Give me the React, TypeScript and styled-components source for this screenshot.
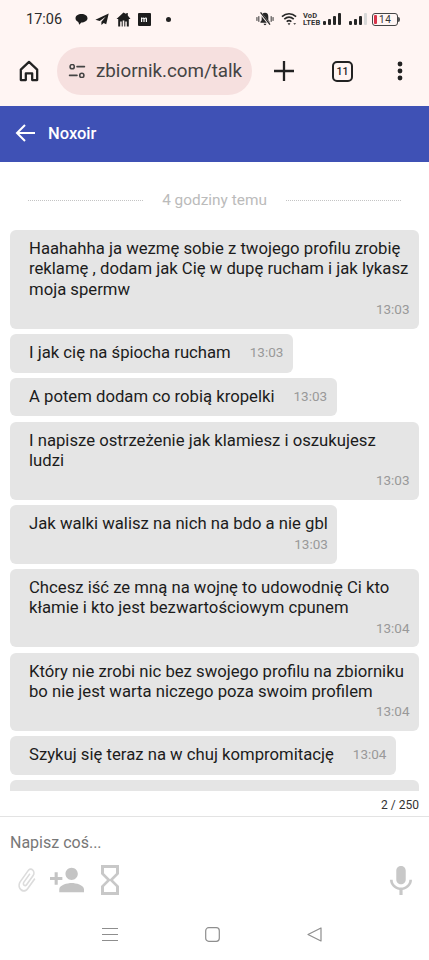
import React from 'react';
import styled, { createGlobalStyle } from 'styled-components';

const GlobalStyle = createGlobalStyle`
  html, body {
    margin: 0;
    padding: 0;
    background: #fff;
    font-family: Roboto, 'Liberation Sans', sans-serif;
  }
`;

const Page = styled.div`
  width: 429px;
  height: 960px;
  display: flex;
  flex-direction: column;
  overflow: hidden;
  background: #fff;
`;

const BrowserTop = styled.div`
  background: #fff5f3;
  height: 106px;
  flex: none;
`;

const StatusBar = styled.div`
  height: 38px;
  display: flex;
  align-items: center;
  padding: 0 31px 0 26px;
  color: #2b2b2b;
`;

const Clock = styled.span`
  font-size: 14.5px;
  width: 49px;
`;

const StatusLeft = styled.div`
  display: flex;
  align-items: center;
  gap: 7px;
`;

const StatusRight = styled.div`
  margin-left: auto;
  display: flex;
  align-items: center;
  gap: 5px;
`;

const NotifDot = styled.span`
  width: 5px;
  height: 5px;
  border-radius: 50%;
  background: #222;
  margin-left: 8px;
`;

const Volte = styled.span`
  display: flex;
  flex-direction: column;
  font-size: 7.5px;
  line-height: 7.5px;
  font-weight: 700;
  letter-spacing: 0.1px;
  width: 15px;
  color: #333;
`;

const Battery = styled.span`
  width: 22px;
  height: 11px;
  border: 1px solid #444;
  border-radius: 3px;
  display: flex;
  align-items: center;
  gap: 2px;
  padding: 0 1px;
  font-size: 10px;
  letter-spacing: 0.6px;
  color: #333;
  position: relative;
  &::before {
    content: '';
    width: 3px;
    height: 9px;
    background: #d8344a;
    border-radius: 1px;
  }
  &::after {
    content: '';
    position: absolute;
    right: -3px;
    top: 3px;
    width: 2px;
    height: 5px;
    background: #555;
    border-radius: 0 2px 2px 0;
  }
`;

const Toolbar = styled.div`
  height: 68px;
  display: flex;
  align-items: flex-start;
  padding: 9px 0 0 18px;
`;

const ToolIcon = styled.div<{ $ml?: number; $w?: number }>`
  height: 48px;
  display: flex;
  align-items: center;
  justify-content: center;
  flex: none;
  margin-left: ${(p) => p.$ml ?? 0}px;
  width: ${(p) => (p.$w ? `${p.$w}px` : 'auto')};
`;

const AddressPill = styled.div`
  margin-left: 17px;
  width: 195px;
  height: 48px;
  border-radius: 24px;
  background: #f6e0df;
  display: flex;
  align-items: center;
  padding-left: 11px;
  box-sizing: border-box;
  flex: none;
`;

const UrlText = styled.span`
  margin-left: 10px;
  font-size: 18.8px;
  color: #444;
  white-space: nowrap;
`;

const TabCount = styled.span`
  width: 17px;
  height: 17px;
  border: 2px solid #222;
  border-radius: 5px;
  display: flex;
  align-items: center;
  justify-content: center;
  font-size: 10.5px;
  font-weight: 500;
  color: #222;
`;

const ChatHeader = styled.div`
  height: 56px;
  flex: none;
  background: #3f51b5;
  display: flex;
  align-items: center;
  padding: 0 0 2px 15px;
  box-sizing: border-box;
  color: #fff;
  gap: 13px;
`;

const ChatTitle = styled.span`
  font-size: 16.5px;
  font-weight: 500;
`;

const Thread = styled.div`
  height: 629px;
  flex: none;
  overflow: hidden;
  padding: 0 10px;
  box-sizing: border-box;
  display: flex;
  flex-direction: column;
  gap: 5.3px;
`;

const TimeDivider = styled.div`
  height: 68px;
  flex: none;
  margin-bottom: -5.3px;
  display: flex;
  align-items: center;
  justify-content: center;
  gap: 19px;
  padding: 8px 18px 0;
  box-sizing: border-box;
  font-size: 15.4px;
  color: #bbb;
  white-space: nowrap;
  &::before,
  &::after {
    content: '';
    flex: 1;
    border-top: 1px dotted #c4c4c4;
  }
`;

const Bubble = styled.div<{ $stacked?: boolean; $full?: boolean }>`
  background: #e5e5e5;
  border-radius: 6px;
  align-self: flex-start;
  box-sizing: border-box;
  padding: 9px 9.5px 9px 19px;
  flex: none;
  display: ${(p) => (p.$stacked ? 'block' : 'flex')};
  gap: 19px;
  width: ${(p) => (p.$full ? '409px' : 'auto')};
  max-width: 409px;
`;

const BubbleText = styled.div`
  font-size: 16.7px;
  line-height: 20.4px;
  color: #1c1c1c;
`;

const BubbleTime = styled.div`
  font-size: 13.5px;
  line-height: 19.7px;
  color: #999;
  text-align: right;
  white-space: nowrap;
`;

const EmptyBubble = styled.div`
  background: #e5e5e5;
  border-radius: 6px 6px 0 0;
  height: 40px;
  flex: none;
`;

const Counter = styled.div`
  height: 26px;
  flex: none;
  display: flex;
  align-items: center;
  justify-content: flex-end;
  padding: 2px 10px 0 0;
  box-sizing: border-box;
  font-size: 12px;
  color: #333;
  border-bottom: 1px solid #e3e3e3;
`;

const Composer = styled.div`
  padding: 16px 10px 0;
  flex: none;
  height: 92px;
  box-sizing: border-box;
`;

const Placeholder = styled.div`
  font-size: 16px;
  line-height: 20px;
  color: #777;
`;

const ComposerIcons = styled.div`
  display: flex;
  align-items: center;
  margin-top: 12px;
  padding: 0 7px 0 5px;
  gap: 11px;
`;

const HourglassWrap = styled.div`
  display: flex;
  margin-left: 6px;
`;

const MicWrap = styled.div`
  margin-left: auto;
  display: flex;
`;

const NavBar = styled.div`
  flex: 1;
  display: flex;
  align-items: flex-start;
  justify-content: center;
  gap: 87px;
  padding: 18px 5px 0 0;
`;

const SignalSvg = styled.svg<{ $second?: boolean }>`
  margin-left: ${(p) => (p.$second ? 3 : 0)}px;
`;

const MuteSvg = styled.svg`
  margin-right: 2px;
`;

const messages: { text: string; time: string; stacked?: boolean; full?: boolean }[] = [
  { text: 'Haahahha ja wezmę sobie z twojego profilu zrobię reklamę , dodam jak Cię w dupę rucham i jak lykasz moja spermw', time: '13:03', stacked: true, full: true },
  { text: 'I jak cię na śpiocha rucham', time: '13:03' },
  { text: 'A potem dodam co robią kropelki', time: '13:03' },
  { text: 'I napisze ostrzeżenie jak klamiesz i oszukujesz ludzi', time: '13:03', stacked: true, full: true },
  { text: 'Jak walki walisz na nich na bdo a nie gbl', time: '13:03', stacked: true },
  { text: 'Chcesz iść ze mną na wojnę to udowodnię Ci kto kłamie i kto jest bezwartościowym cpunem', time: '13:04', stacked: true, full: true },
  { text: 'Który nie zrobi nic bez swojego profilu na zbiorniku bo nie jest warta niczego poza swoim profilem', time: '13:04', stacked: true, full: true },
  { text: 'Szykuj się teraz na w chuj kompromitację', time: '13:04' },
];

const ChatBubbleIcon = () => (
  <svg width="13" height="13" viewBox="0 0 13 13" fill="#1d1d1d">
    <path d="M6.5 1C3 1 .5 2.8.5 5.3c0 1.8 1.2 3 2.8 3.700l1 2.800 2-2.300c3.200 0 6.200-1.700 6.200-4.200C12.500 2.800 10 1 6.500 1z" />
  </svg>
);

const TelegramIcon = () => (
  <svg width="14" height="13" viewBox="0 0 14 13" fill="#1d1d1d">
    <path d="M13.700.6L.4 6.800l4.300 1.300 6-4.400-4.300 5.100v3.100l2.300-2 2.500 1.300z" />
  </svg>
);

const HouseIcon = () => (
  <svg width="15" height="15" viewBox="0 0 15 15" fill="#1d1d1d">
    <path d="M7.500.5L.5 7h1.700v7.500h2V9.500h1.500v5h1V8.500h1.600v6h1V9.500h1.500v5h2V7h1.700L11.800 3.400V1h-1.500v1z" />
  </svg>
);

const MediumIcon = () => (
  <svg width="13" height="13" viewBox="0 0 13 13">
    <rect width="13" height="13" rx="1" fill="#1d1d1d" />
    <path d="M3 9V4.500h1.200v.5c.7-.7 1.600-.7 2.100 0 .8-.8 2.700-.9 2.700.9V9H7.800V6.200c0-.8-1-.8-1.200 0V9H5.400V6.200c0-.8-1-.8-1.200 0V9z" fill="#fff" />
  </svg>
);

const MuteIcon = () => (
  <MuteSvg width="18" height="16" viewBox="0 0 19 16" fill="#262626">
    <path d="M9.500 1.500c-2.400 0-3.500 1.800-3.500 4v3.700L4.700 11v1h9.600v-1L13 9.200V5.500c0-2.200-1.100-4-3.500-4zM8 13c.2 1 .8 1.500 1.500 1.500S10.800 14 11 13z" />
    <path d="M4.500 1.500L14.500 14" stroke="#fff5f3" strokeWidth="2.400" />
    <path d="M4.800 1L14.800 14" stroke="#262626" strokeWidth="1.300" />
    <path d="M1 6v4M3 5v6M16 5v6M18 6v4" stroke="#262626" strokeWidth="1" />
  </MuteSvg>
);

const WifiIcon = () => (
  <svg width="17" height="14" viewBox="0 0 18 14" fill="none" stroke="#262626" strokeWidth="1.700">
    <path d="M1 4.500c4.500-4 10.500-4 15 0M3.500 7.200c3-2.700 7-2.700 10 0M6 9.800c1.600-1.400 3.400-1.400 5 0" />
    <path d="M8.500 13.500L7 11.500h3z" fill="#262626" stroke="none" />
    <path d="M13 11.500h3l-1.500 1.500z" fill="#262626" stroke="none" />
  </svg>
);

const SignalIcon = ({ faint }: { faint?: boolean }) => (
  <SignalSvg $second={faint} width="18" height="13" viewBox="0 0 18 13" fill="#262626">
    <rect x="0" y="8" width="3" height="4" rx="1" />
    <rect x="5" y="6" width="3" height="6" rx="1" />
    <rect x="10" y="3" width="3" height="9" rx="1" />
    <rect x="15" y="0" width="3" height="12" rx="1" fill={faint ? '#d8d8d8' : '#262626'} />
  </SignalSvg>
);

const HomeIcon = () => (
  <svg width="20" height="22" viewBox="0 0 22 24" fill="none" stroke="#222" strokeWidth="2.500" strokeLinejoin="round">
    <path d="M2 10.500L11 2l9 8.500V22h-5.500v-7.500h-7V22H2z" />
  </svg>
);

const TuneIcon = () => (
  <svg width="18" height="14" viewBox="0 0 20 16" fill="none" stroke="#444" strokeWidth="1.800" strokeLinecap="round">
    <circle cx="4.500" cy="3" r="2.400" />
    <path d="M10 3h8.500M1.500 13h8.500" />
    <circle cx="15.500" cy="13" r="2.400" />
  </svg>
);

const PlusIcon = () => (
  <svg width="20" height="20" viewBox="0 0 20 20" stroke="#222" strokeWidth="2.300">
    <path d="M10 0v20M0 10h20" />
  </svg>
);

const DotsIcon = () => (
  <svg width="6" height="20" viewBox="0 0 6 20" fill="#222">
    <circle cx="3" cy="3" r="2.400" />
    <circle cx="3" cy="10" r="2.400" />
    <circle cx="3" cy="17" r="2.400" />
  </svg>
);

const BackArrow = () => (
  <svg width="20" height="18" viewBox="0 0 20 18" fill="none" stroke="#fff" strokeWidth="2">
    <path d="M20 9H2M10 1L2 9l8 8" />
  </svg>
);

const ClipIcon = () => (
  <svg width="24" height="28" viewBox="0 0 24 24" preserveAspectRatio="none" fill="#dcdcdc">
    <path
      transform="rotate(40 12 12)"
      d="M16.500 6v11.500c0 2.210-1.790 4-4 4s-4-1.790-4-4V5c0-1.380 1.120-2.500 2.500-2.500s2.500 1.120 2.500 2.500v10.500c0 .55-.45 1-1 1s-1-.45-1-1V6H10v9.500c0 1.380 1.120 2.500 2.500 2.500s2.500-1.120 2.500-2.500V5c0-2.210-1.790-4-4-4S7 2.790 7 5v12.500c0 3.040 2.460 5.500 5.500 5.500s5.500-2.460 5.500-5.500V6h-1.500z"
    />
  </svg>
);

const AddPersonIcon = () => (
  <svg width="34" height="28" viewBox="1 3 22 18" fill="#c4c4c4">
    <path d="M15 12c2.210 0 4-1.790 4-4s-1.790-4-4-4-4 1.790-4 4 1.790 4 4 4zm-9-2V7H4v3H1v2h3v3h2v-3h3v-2H6zm9 4c-2.670 0-8 1.340-8 4v2h16v-2c0-2.660-5.330-4-8-4z" />
  </svg>
);

const HourglassIcon = () => (
  <svg width="18" height="30" viewBox="6 2 12 20" preserveAspectRatio="none" fill="#c8c8c8">
    <path d="M6 2v6h.01L6 8.010 10 12l-4 4 .01.010H6V22h12v-5.990h-.01L18 16l-4-4 4-3.990-.01-.01H18V2H6zm10 14.500V20H8v-3.500l4-4 4 4zm-4-5l-4-4V4h8v3.500l-4 4z" />
  </svg>
);

const MicIcon = () => (
  <svg width="22" height="29" viewBox="5 2 14 19" preserveAspectRatio="none" fill="#c8c8c8">
    <path d="M12 14c1.660 0 3-1.340 3-3V5c0-1.660-1.340-3-3-3S9 3.340 9 5v6c0 1.660 1.340 3 3 3zm5.300-3c0 3-2.540 5.100-5.300 5.100S6.700 14 6.700 11H5c0 3.410 2.720 6.230 6 6.720V21h2v-3.280c3.280-.48 6-3.300 6-6.720h-1.700z" />
  </svg>
);

const NavMenu = () => (
  <svg width="16" height="15" viewBox="0 0 16 15" stroke="#8e8e8e" strokeWidth="1.100">
    <path d="M0 1.500h16M0 7.500h16M0 13.500h16" />
  </svg>
);

const NavHome = () => (
  <svg width="15" height="15" viewBox="0 0 15 15" fill="none" stroke="#8e8e8e" strokeWidth="1.200">
    <rect x=".7" y=".7" width="13.600" height="13.600" rx="3" />
  </svg>
);

const NavBack = () => (
  <svg width="15" height="15" viewBox="0 0 15 15" fill="none" stroke="#8e8e8e" strokeWidth="1.200" strokeLinejoin="round">
    <path d="M14 1v13L1 7.500z" />
  </svg>
);

export default function App() {
  return (
    <Page>
      <GlobalStyle />
      <BrowserTop>
        <StatusBar>
          <Clock>17:06</Clock>
          <StatusLeft>
            <ChatBubbleIcon />
            <TelegramIcon />
            <HouseIcon />
            <MediumIcon />
            <NotifDot />
          </StatusLeft>
          <StatusRight>
            <MuteIcon />
            <WifiIcon />
            <Volte>
              <span>VoD</span>
              <span>LTEB</span>
            </Volte>
            <SignalIcon />
            <SignalIcon faint />
            <Battery>14</Battery>
          </StatusRight>
        </StatusBar>
        <Toolbar>
          <ToolIcon $w={22}>
            <HomeIcon />
          </ToolIcon>
          <AddressPill>
            <TuneIcon />
            <UrlText>zbiornik.com/talk</UrlText>
          </AddressPill>
          <ToolIcon $ml={22}>
            <PlusIcon />
          </ToolIcon>
          <ToolIcon $ml={38}>
            <TabCount>11</TabCount>
          </ToolIcon>
          <ToolIcon $ml={44}>
            <DotsIcon />
          </ToolIcon>
        </Toolbar>
      </BrowserTop>
      <ChatHeader>
        <BackArrow />
        <ChatTitle>Noxoir</ChatTitle>
      </ChatHeader>
      <Thread>
        <TimeDivider>4 godziny temu</TimeDivider>
        {messages.map((m) => (
          <Bubble key={m.text} $stacked={m.stacked} $full={m.full}>
            <BubbleText>{m.text}</BubbleText>
            <BubbleTime>{m.time}</BubbleTime>
          </Bubble>
        ))}
        <EmptyBubble />
      </Thread>
      <Counter>2 / 250</Counter>
      <Composer>
        <Placeholder>Napisz coś...</Placeholder>
        <ComposerIcons>
          <ClipIcon />
          <AddPersonIcon />
          <HourglassWrap>
            <HourglassIcon />
          </HourglassWrap>
          <MicWrap>
            <MicIcon />
          </MicWrap>
        </ComposerIcons>
      </Composer>
      <NavBar>
        <NavMenu />
        <NavHome />
        <NavBack />
      </NavBar>
    </Page>
  );
}
